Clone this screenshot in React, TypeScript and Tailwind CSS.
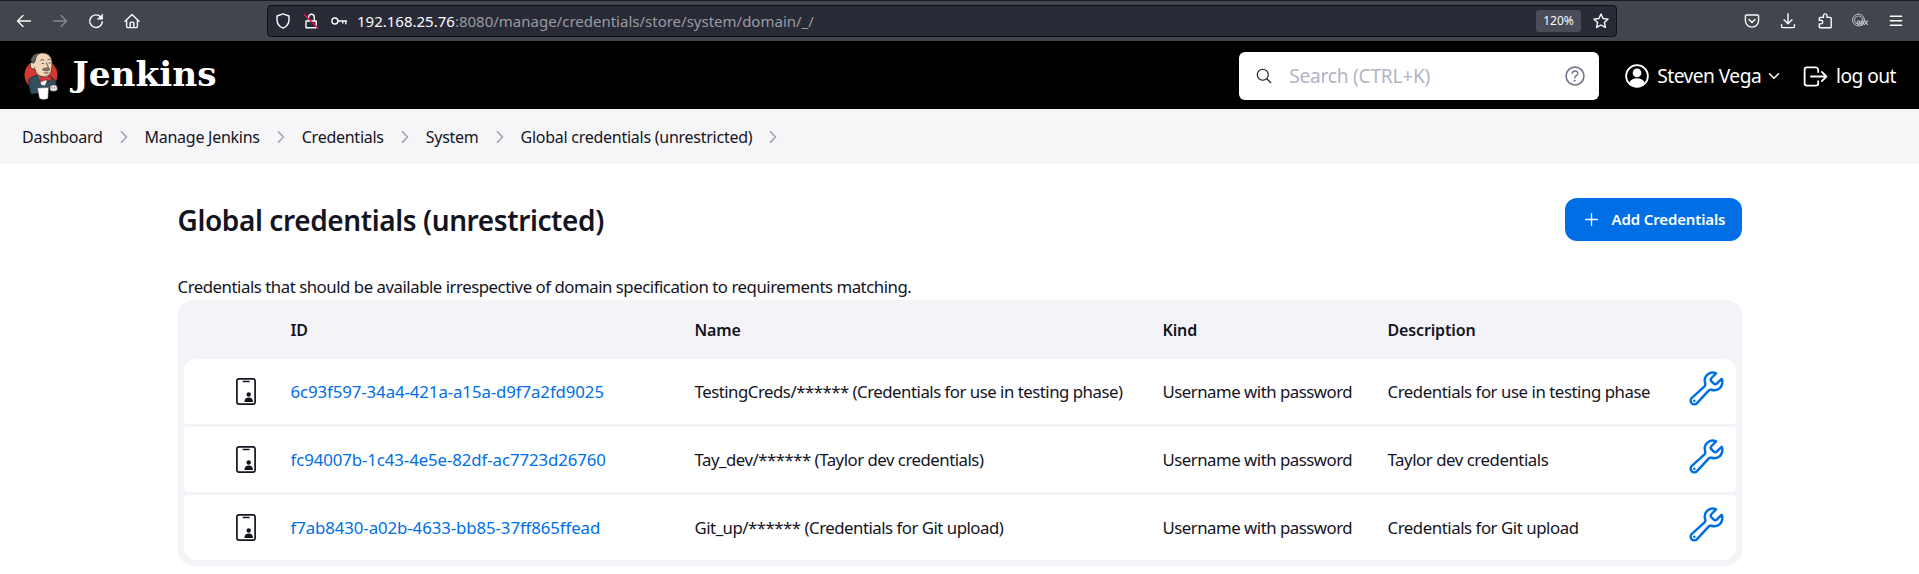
import React from "react";
import {
  IoAddOutline,
  IoBuildOutline,
  IoChevronDownOutline,
  IoChevronForwardOutline,
  IoHelpCircleOutline,
  IoLogOutOutline,
  IoSearchOutline,
} from "react-icons/io5";

const line = {
  fill: "none",
  stroke: "currentColor",
  strokeWidth: 1.4,
  strokeLinecap: "round" as const,
  strokeLinejoin: "round" as const,
};

function Glyph({ children, className = "" }: { children: React.ReactNode; className?: string }) {
  return (
    <svg viewBox="0 0 16 16" className={`size-4 shrink-0 ${className}`} {...line}>
      {children}
    </svg>
  );
}

function BrowserBar() {
  return (
    <div className="flex h-[41px] items-center border-t border-[#1c1b22] bg-[#42454c] pb-px text-[#fbfbfe]">
      <div className="flex w-[267px] items-center gap-5 pl-4">
        <Glyph>
          <path d="M14.5 8H1.5M7 2.5 1.5 8 7 13.5" />
        </Glyph>
        <Glyph className="text-[#85878c]">
          <path d="M1.5 8h13M9 2.5 14.5 8 9 13.5" />
        </Glyph>
        <Glyph>
          <path d="M12.7 4A6.3 6.3 0 1 0 14.3 8.6" />
          <path d="M14.6 1.2v5h-5z" fill="currentColor" strokeWidth=".6" />
        </Glyph>
        <Glyph>
          <path d="M1 8.3 8 1.5l7 6.8M2.6 7v6.6c0 .6.4 1 1 1h8.800c.6 0 1-.4 1-1V7M6.200 14.400V10c0-.5.400-.9.900-.9h1.800c.5 0 .9.400.9.900v4.400" />
        </Glyph>
      </div>
      <div className="flex h-8 w-[1350px] items-center rounded border border-[#0f1016] bg-[#282a36] pr-[7px] pl-[7px]">
        <Glyph>
          <path d="M8 .9 14 3v3.400c0 4-2 7-6 8.800-4-1.800-6-4.800-6-8.800V3z" />
        </Glyph>
        <Glyph className="ml-3">
          <path d="M3 8h10.200v6.700H3zM5.500 8V4.200a2.900 2.900 0 0 1 5.800 0V8" />
          <path d="M1.600 1.800 14.800 15" stroke="#e2164f" strokeWidth="1.500" />
        </Glyph>
        <Glyph className="ml-3">
          <circle cx="3.900" cy="8" r="3" />
          <path d="M7 8h8.500M14.800 8v2.800M11.800 8v2" />
        </Glyph>
        <div className="ml-[10px] text-[15px] leading-5">
          192.168.25.76<span className="text-[#9a9ba1]">:8080/manage/credentials/store/system/domain/_/</span>
        </div>
        <div className="ml-auto flex h-[22px] w-[45px] items-center justify-center rounded-[3px] bg-[#4a4c57] text-[12px]">
          120%
        </div>
        <Glyph className="ml-3">
          <path d="m8 1 2.100 4.500 5 .6-3.700 3.400 1 4.900L8 12l-4.400 2.400 1-4.900L.9 6.100l5-.6z" />
        </Glyph>
      </div>
      <div className="ml-auto flex items-center gap-5 pr-[15px]">
        <Glyph>
          <path d="M2.300 2h11.400c.5 0 .9.400.9.900V7.500a6.600 6.600 0 0 1-13.200 0V2.900c0-.5.400-.9.900-.9z" />
          <path d="m5 6.500 3 3 3-3" />
        </Glyph>
        <Glyph>
          <path d="M8 .8v9.700M4 6.800l4 3.900 4-3.900M1.600 11.800v1.600c0 .7.500 1.200 1.200 1.200h10.400c.7 0 1.200-.5 1.200-1.200v-1.600" />
        </Glyph>
        <Glyph className="relative left-px">
          <path d="M2.700 14.800h10.600c.5 0 .9-.4.900-.9V5.300c0-.5-.4-.9-.9-.9H10V2.700a1.800 1.800 0 0 0-3.600 0v1.700H3.200c-.5 0-.9.400-.9.900v2h1.600a1.800 1.800 0 0 1 0 3.600H2.300v3z" />
        </Glyph>
        <Glyph className="text-[#c5c6ca]">
          <circle cx="6.500" cy="7" r="5.900" strokeWidth="1" />
          <circle cx="6.500" cy="7" r="4" strokeWidth=".8" />
          <path d="M7.200 8c-2-.6-3 3.300-.6 3.300 1.400 0 1.200-3.300 1.200-3.300v3.300M9.700 8v4.500M9.700 9c2-1.800 2.700 2.700.2 2.300M12.500 7.800l3 3.700M15.500 7.800l-3 3.700" strokeWidth="1.100" />
        </Glyph>
        <Glyph>
          <path d="M2.300 3.200h11.400M2.300 7.700h11.400M2.300 12.200h11.400" />
        </Glyph>
      </div>
    </div>
  );
}

function Butler() {
  return (
    <svg viewBox="0 0 34 48" className="h-12 w-[34px] shrink-0">
      <ellipse cx="17" cy="23" rx="16.500" ry="15.500" fill="#d33833" />
      <path d="M5 27c3-2 6-3.500 9-3.500l12 1.500c4 1 6 4 6.500 8l-6 2-2 4-8 2-9.500 1C5.500 37 4.500 32 5 27z" fill="#335061" stroke="#10242f" strokeWidth=".8" />
      <path d="m14 23 3 10 4 1 4-10z" fill="#fff" stroke="#222" strokeWidth=".5" />
      <path d="M8 11C8 4.500 13 1 18.500 1c6 0 9.500 4 9.500 10 0 4-.3 9-2.500 11.500-2 2-5.500 2.500-8 2-4-1-6-4-6.500-7.500-3 0-4.500-3-3-6z" fill="#f0d6b7" stroke="#3b2b23" strokeWidth=".7" />
      <path d="M8.500 11c-2-.5-2-4-.5-6 2-3 4.500-4.200 8-4-3 1.500-4.500 4-4.500 7l-1.500 3z" fill="#5f5e64" stroke="#1d1919" strokeWidth=".6" />
      <path d="M7.500 10.500c-1.800 1-1.500 6 1.500 6.500 1.500 0 2-1 2-2" fill="#f0d6b7" stroke="#3b2b23" strokeWidth=".7" />
      <path d="M16.500 8.500c1-1.200 2.500-1.200 3.500 0M23.500 8c1-.8 2-.7 3 0M18 11.500h2M24.500 11h2M22.500 10.500c-.2 2 2.500 4 1.500 5.500" fill="none" stroke="#3b2b23" strokeWidth=".8" />
      <path d="M18.500 17.500c2-2 5-2 7.500-.5-1.500 2-4.500 2.500-7.500.5zM20 20.500c1.500 1 3 1 4.500 0" fill="#9a8176" stroke="#3b2b23" strokeWidth=".7" />
      <path d="m15.500 24 5.500 1.500 6-1.500.5 5-6-1-5.500 2z" fill="#d33833" stroke="#611b19" strokeWidth=".6" />
      <path d="M26 34c2-1.500 6-1.500 7 0l.5 4c-2 1.800-5.500 1.500-7.500.5z" fill="#e6e6e6" stroke="#333" strokeWidth=".6" />
      <path d="m13.500 36 11-.5-.5 11c-3 1.300-6 1.300-8.500 0z" fill="#fff" stroke="#555" strokeWidth=".5" />
      <path d="M28 36.500v-1.500M30.500 36.500v-1.500" stroke="#444" strokeWidth=".6" />
    </svg>
  );
}

function Header() {
  return (
    <header className="flex h-[68px] items-center bg-black pt-0.5 text-[19.200px] tracking-[-0.55px] text-white">
      <div className="flex items-center gap-[15px] pl-[23.500px]">
        <Butler />
        <span className="pb-[4px] font-['DejaVu_Serif',serif] text-[34.300px] leading-none font-bold tracking-normal">
          Jenkins
        </span>
      </div>
      <div className="ml-auto flex h-12 w-[360px] items-center rounded-md bg-white pr-[11px] pl-4 tracking-[-0.28px] text-[#b3b3c4]">
        <IoSearchOutline className="size-[18px] text-[#14141f]" />
        <span className="ml-4">Search (CTRL+K)</span>
        <IoHelpCircleOutline className="ml-auto size-[26px] text-[#73738c]" />
      </div>
      <div className="flex items-center pl-[26px]">
        <svg viewBox="0 0 24 24" className="size-6 shrink-0">
          <circle cx="12" cy="12" r="10.900" fill="none" stroke="white" strokeWidth="1.800" />
          <circle cx="12" cy="8.900" r="4.300" fill="white" />
          <path d="M4.300 18.500c1.700-3 4.500-4.300 7.700-4.300s6 1.300 7.700 4.300A10.500 10.500 0 0 1 12 22.500a10.500 10.500 0 0 1-7.700-4z" fill="white" />
        </svg>
        <span className="ml-2">Steven Vega</span>
        <IoChevronDownOutline className="ml-[5px] size-4" />
      </div>
      <div className="flex items-center pr-[23px] pl-[19px]">
        <IoLogOutOutline className="size-[29px]" />
        <span className="ml-[6px]">log out</span>
      </div>
    </header>
  );
}

const crumbs = ["Dashboard", "Manage Jenkins", "Credentials", "System", "Global credentials (unrestricted)"];

function Breadcrumbs() {
  return (
    <nav className="flex h-[55px] items-center bg-[#f6f6f9] pl-[22px] text-[16px] tracking-[-0.26px]">
      {crumbs.map((crumb) => (
        <div key={crumb} className="flex items-center">
          <span>{crumb}</span>
          <IoChevronForwardOutline className="mr-[12px] ml-[12px] size-[18px] text-[#a5a5bb]" />
        </div>
      ))}
    </nav>
  );
}

const rows = [
  ["6c93f597-34a4-421a-a15a-d9f7a2fd9025", "TestingCreds/****** (Credentials for use in testing phase)", "Credentials for use in testing phase"],
  ["fc94007b-1c43-4e5e-82df-ac7723d26760", "Tay_dev/****** (Taylor dev credentials)", "Taylor dev credentials"],
  ["f7ab8430-a02b-4633-bb85-37ff865ffead", "Git_up/****** (Credentials for Git upload)", "Credentials for Git upload"],
];

function IdCard() {
  return (
    <svg viewBox="0 0 20 27" className="ml-[52px] h-[27px] w-5 text-[#14141f]">
      <rect x=".9" y=".9" width="18.200" height="25.200" rx="2.200" fill="none" stroke="currentColor" strokeWidth="1.700" />
      <path d="M7.200 3.400h5.800" stroke="currentColor" strokeWidth="1.500" strokeLinecap="round" />
      <circle cx="12.700" cy="16.500" r="2.200" fill="currentColor" />
      <path d="M8.400 24c0-3 1.800-4.400 4.300-4.400S17 21 17 24z" fill="currentColor" />
    </svg>
  );
}

function CredentialsTable() {
  return (
    <div className="h-[266px] rounded-[16px] bg-[#f3f3f8] px-1.5 pb-1.5">
      <div className="grid h-[59px] grid-cols-[107px_404px_468px_225px_1fr] items-center text-[16px] font-semibold tracking-[-0.15px]">
        <span />
        <span>ID</span>
        <span>Name</span>
        <span>Kind</span>
        <span>Description</span>
      </div>
      <div className="flex flex-col gap-[3px]">
        {rows.map(([id, name, description]) => (
          <div
            key={id}
            className="grid h-[65px] grid-cols-[107px_404px_468px_225px_1fr_49px] items-center rounded-[4px] bg-white tracking-[-0.49px] first:rounded-t-[12px] last:rounded-b-[12px]"
          >
            <IdCard />
            <a className="tracking-[-0.08px] text-[#006fe6]">{id}</a>
            <span>{name}</span>
            <span>Username with password</span>
            <span className="tracking-[-0.44px]">{description}</span>
            <IoBuildOutline className="mb-[7px] size-[39px] text-[#006fe6]" />
          </div>
        ))}
      </div>
    </div>
  );
}

export default function App() {
  return (
    <div className="h-[574px] overflow-hidden bg-white font-['Noto_Sans',sans-serif] text-[16.800px] whitespace-nowrap text-[#14141f]">
      <BrowserBar />
      <Header />
      <Breadcrumbs />
      <main className="mx-auto w-[1564px] pt-[34px]">
        <div className="flex h-[43px] items-center justify-between">
          <h1 className="text-[28px] font-semibold tracking-[-0.4px]">Global credentials (unrestricted)</h1>
          <button className="flex h-[43px] w-[177px] items-center rounded-[12px] bg-[#006fe6] pl-4 text-[15px] font-semibold tracking-[-0.13px] text-white">
            <IoAddOutline className="size-[21px]" />
            <span className="ml-[10px]">Add Credentials</span>
          </button>
        </div>
        <p className="mt-[33px] mb-px h-[25px] leading-[25px] tracking-[-0.47px]">
          Credentials that should be available irrespective of domain specification to requirements matching.
        </p>
        <CredentialsTable />
      </main>
    </div>
  );
}
